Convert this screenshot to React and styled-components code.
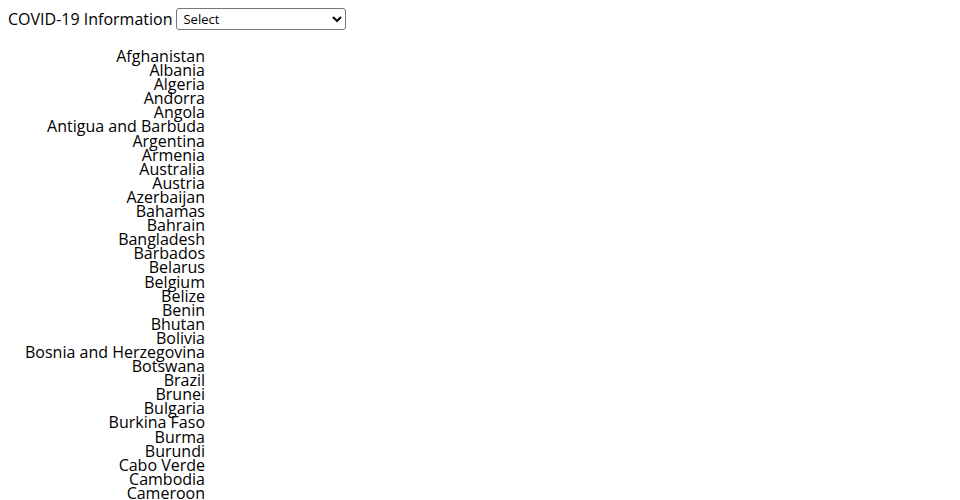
import React from "react"
import styled, { createGlobalStyle } from "styled-components"

const countries = [
  "Afghanistan", "Albania", "Algeria", "Andorra", "Angola", "Antigua and Barbuda",
  "Argentina", "Armenia", "Australia", "Austria", "Azerbaijan", "Bahamas", "Bahrain",
  "Bangladesh", "Barbados", "Belarus", "Belgium", "Belize", "Benin", "Bhutan", "Bolivia",
  "Bosnia and Herzegovina", "Botswana", "Brazil", "Brunei", "Bulgaria", "Burkina Faso",
  "Burma", "Burundi", "Cabo Verde", "Cambodia", "Cameroon", "Canada",
]

const GlobalStyle = createGlobalStyle`
  body {
    margin: 8px;
    font-family: "Open Sans", sans-serif;
    color: #000;
    background: #fff;
  }
`

const App = () => {
  return (
    <>
      <GlobalStyle />
      <Header>
        <Title>COVID-19 Information</Title>
        <Picker defaultValue="">
          <option value="">Select</option>
          {countries.map((c) => (
            <option key={c} value={c}>{c}</option>
          ))}
        </Picker>
      </Header>
      <CountryList>
        {countries.map((c) => (
          <Country key={c}>{c}</Country>
        ))}
      </CountryList>
    </>
  )
}

export default App

const Header = styled.div`
  display: flex;
  align-items: center;
  gap: 4px;
  height: 22px;
`
const Title = styled.span`
  font-size: 16px;
  line-height: 20px;
`
const Picker = styled.select`
  width: 170px;
  height: 22px;
  font-family: "Open Sans", sans-serif;
  font-size: 13px;
  border: 1px solid #767676;
  border-radius: 3px;
  background: #fff;
  color: #000;
  padding: 0 2px;
`
const CountryList = styled.div`
  width: 197px;
  margin-top: 19px;
  text-align: right;
`
const Country = styled.div`
  font-size: 16px;
  line-height: 14.1px;
`
